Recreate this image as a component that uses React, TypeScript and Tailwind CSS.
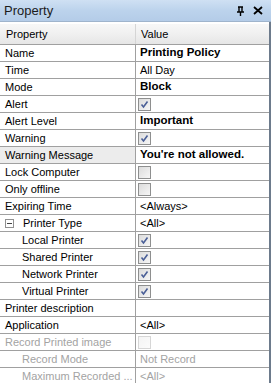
import React from 'react';

type Row = {
  label: string;
  value?: string;
  bold?: boolean;
  check?: boolean;
  indent?: boolean;
  toggle?: boolean;
  disabled?: boolean;
  selected?: boolean;
};

const rows: Row[] = [
  { label: 'Name', value: 'Printing Policy', bold: true },
  { label: 'Time', value: 'All Day' },
  { label: 'Mode', value: 'Block', bold: true },
  { label: 'Alert', check: true },
  { label: 'Alert Level', value: 'Important', bold: true },
  { label: 'Warning', check: true },
  { label: 'Warning Message', value: "You're not allowed.", bold: true, selected: true },
  { label: 'Lock Computer', check: false },
  { label: 'Only offline', check: false },
  { label: 'Expiring Time', value: '<Always>' },
  { label: 'Printer Type', value: '<All>', toggle: true },
  { label: 'Local Printer', check: true, indent: true },
  { label: 'Shared Printer', check: true, indent: true },
  { label: 'Network Printer', check: true, indent: true },
  { label: 'Virtual Printer', check: true, indent: true },
  { label: 'Printer description', value: '' },
  { label: 'Application', value: '<All>' },
  { label: 'Record Printed image', check: false, disabled: true },
  { label: 'Record Mode', value: 'Not Record', indent: true, disabled: true },
  { label: 'Maximum Recorded ...', value: '<All>', indent: true, disabled: true },
];

function CheckBox({ checked, disabled }: { checked: boolean; disabled?: boolean }) {
  return (
    <div
      className={`w-[13px] h-[13px] border flex items-center justify-center ${
        disabled
          ? 'border-[#d6d6d6] bg-gradient-to-br from-[#f4f4f4] to-[#fbfbfb]'
          : 'border-[#8e8f8f] bg-gradient-to-br from-[#dcdcdc] to-[#f6f6f6]'
      }`}
    >
      {checked && (
        <svg width="9" height="9" viewBox="0 0 9 9">
          <path d="M1.5 4.5 L3.5 7 L7.5 1.5" fill="none" stroke="#4a5f97" strokeWidth="1.6" />
        </svg>
      )}
    </div>
  );
}

export default function App() {
  return (
    <div className="w-[271px] h-[383px] overflow-hidden bg-white font-['Liberation_Sans',Arial,sans-serif] text-[11px] text-black select-none">
      {/* Title bar */}
      <div className="h-[22px] flex items-center justify-between pl-[4px] pr-[8px] bg-gradient-to-b from-[#cfe0f3] via-[#bcd3ec] to-[#b4cce8] border-b border-[#9fb4cc]">
        <span className="text-[13px] text-[#1b1b1b] leading-none">Property</span>
        <div className="flex items-center gap-[8px]">
          <svg width="9" height="10" viewBox="0 0 9 10">
            <path d="M2 1 H7 M3 1 V6 M6 1 V6 M1 6 H8 M4.5 6 V10" fill="none" stroke="#000" strokeWidth="1.4" />
          </svg>
          <svg width="10" height="9" viewBox="0 0 10 9">
            <path d="M1 1 L9 8 M9 1 L1 8" fill="none" stroke="#000" strokeWidth="1.8" />
          </svg>
        </div>
      </div>

      {/* Grid */}
      <div className="border-r-2 border-[#6d7b8c] h-[361px] pt-[2px]">
        <div className="h-[21px] flex border-b border-[#a0a0a0] bg-gradient-to-b from-[#f7f7f7] via-[#f0f0f0] to-[#e6e6e6]">
          <div className="w-[136px] border-r border-[#d5d5d5] pl-[6px] flex items-center">Property</div>
          <div className="flex-1 pl-[5px] flex items-center">Value</div>
        </div>
        {rows.map((r) => {
          const text = r.disabled ? 'text-[#a3a3a3]' : 'text-black';
          return (
            <div key={r.label} className="h-[17px] flex border-b border-[#a0a0a0]">
              <div
                className={`w-[136px] border-r border-[#a0a0a0] flex items-center whitespace-nowrap overflow-hidden ${text} ${
                  r.selected ? 'bg-[#ececec]' : ''
                } ${r.indent ? 'pl-[22px]' : 'pl-[5px]'}`}
              >
                {r.toggle && (
                  <div className="w-[9px] h-[9px] border border-[#919191] bg-white flex items-center justify-center mr-[9px]">
                    <div className="w-[5px] h-px bg-[#444]" />
                  </div>
                )}
                {r.label}
              </div>
              <div className={`flex-1 flex items-center pl-[4px] ${text} ${r.bold ? 'font-bold text-[11.5px]' : ''}`}>
                {r.check !== undefined ? (
                  <div className="ml-[-2px]">
                    <CheckBox checked={r.check} disabled={r.disabled} />
                  </div>
                ) : (
                  r.value
                )}
              </div>
            </div>
          );
        })}
      </div>
    </div>
  );
}
